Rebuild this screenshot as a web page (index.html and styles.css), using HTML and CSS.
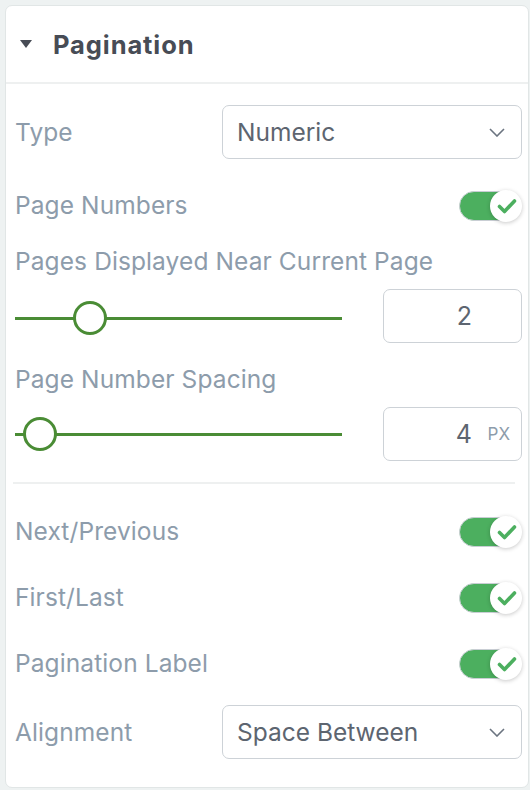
FILE: index.html
```html
<!DOCTYPE html>
<html lang="en">
<head>
<meta charset="utf-8">
<title>Pagination</title>
<link rel="stylesheet" href="styles.css">
</head>
<body>
<div class="card">
  <div class="card-header">
    <span class="caret"></span>
    <span class="title">Pagination</span>
  </div>
  <div class="card-body">
    <div class="row row-select first">
      <span class="label">Type</span>
      <div class="select"><span>Numeric</span>
        <svg class="chev" width="16" height="9" viewBox="0 0 16 9"><path d="M1 1l7 7 7-7" fill="none" stroke="#6b7480" stroke-width="1.6"/></svg>
      </div>
    </div>
    <div class="row row-toggle t1">
      <span class="label">Page Numbers</span>
      <div class="toggle"><div class="track"></div><div class="knob"><svg width="20" height="16" viewBox="0 0 20 16"><path d="M2.5 8.5l5 5L17.5 3" fill="none" stroke="#4caf5f" stroke-width="3.6" stroke-linecap="round" stroke-linejoin="round"/></svg></div></div>
    </div>
    <div class="label block-label l1">Pages Displayed Near Current Page</div>
    <div class="row row-slider s1">
      <div class="slider"><div class="rail"></div><div class="thumb" style="left:58px"></div></div>
      <div class="num"><span class="val">2</span></div>
    </div>
    <div class="label block-label l2">Page Number Spacing</div>
    <div class="row row-slider s2">
      <div class="slider"><div class="rail"></div><div class="thumb" style="left:8px"></div></div>
      <div class="num"><span class="val">4</span><span class="unit">PX</span></div>
    </div>
    <div class="divider"></div>
    <div class="row row-toggle t2">
      <span class="label">Next/Previous</span>
      <div class="toggle"><div class="track"></div><div class="knob"><svg width="20" height="16" viewBox="0 0 20 16"><path d="M2.5 8.5l5 5L17.5 3" fill="none" stroke="#4caf5f" stroke-width="3.6" stroke-linecap="round" stroke-linejoin="round"/></svg></div></div>
    </div>
    <div class="row row-toggle t3">
      <span class="label">First/Last</span>
      <div class="toggle"><div class="track"></div><div class="knob"><svg width="20" height="16" viewBox="0 0 20 16"><path d="M2.5 8.5l5 5L17.5 3" fill="none" stroke="#4caf5f" stroke-width="3.6" stroke-linecap="round" stroke-linejoin="round"/></svg></div></div>
    </div>
    <div class="row row-toggle t3">
      <span class="label">Pagination Label</span>
      <div class="toggle"><div class="track"></div><div class="knob"><svg width="20" height="16" viewBox="0 0 20 16"><path d="M2.5 8.5l5 5L17.5 3" fill="none" stroke="#4caf5f" stroke-width="3.6" stroke-linecap="round" stroke-linejoin="round"/></svg></div></div>
    </div>
    <div class="row row-select last">
      <span class="label">Alignment</span>
      <div class="select"><span>Space Between</span>
        <svg class="chev" width="16" height="9" viewBox="0 0 16 9"><path d="M1 1l7 7 7-7" fill="none" stroke="#6b7480" stroke-width="1.6"/></svg>
      </div>
    </div>
  </div>
</div>
</body>
</html>
```
FILE: styles.css
```css
html, body { margin: 0; padding: 0; }
body {
  background: #eef2f2;
  font-family: Inter, "Noto Sans", sans-serif;
  width: 530px;
  height: 790px;
  overflow: hidden;
}
.card {
  margin: 5px 0 0 5px;
  width: 524px;
  box-sizing: border-box;
  background: #fff;
  border: 1px solid #e1e6e6;
  border-radius: 7px;
  height: 783px;
}
.card-header {
  height: 76px;
  border-bottom: 2px solid #eef0f0;
  display: flex;
  align-items: center;
  padding-left: 14px;
  box-sizing: content-box;
}
.caret {
  width: 0; height: 0;
  border-left: 6px solid transparent;
  border-right: 6px solid transparent;
  border-top: 8px solid #474c55;
  margin-right: 21px;
}
.title {
  font-size: 25.5px;
  font-weight: 700;
  color: #474c55;
  letter-spacing: 0.9px;
}
.card-body {
  padding: 21px 6px 0 9px;
}
.label {
  font-size: 24.5px;
  color: #8d9cab;
  letter-spacing: 0.1px;
}
.row {
  display: flex;
  align-items: center;
  justify-content: space-between;
}
.row-select { height: 54px; }
.row-toggle { height: 32px; }
.row-toggle .label { margin-top: -3px; }
.t1 { margin-top: 31px; }
.t2 { margin-top: 32px; }
.t3 { margin-top: 34px; }
.last { margin-top: 25px; }
.select {
  width: 300px;
  height: 54px;
  box-sizing: border-box;
  border: 1.5px solid #cdd2d7;
  border-radius: 7px;
  display: flex;
  align-items: center;
  justify-content: space-between;
  padding: 0 16px 0 14px;
  font-size: 24.5px;
  color: #5d6570;
}
.chev { margin-top: 1px; }
.toggle {
  position: relative;
  width: 63px;
  height: 32px;
}
.track {
  position: absolute;
  left: 0; top: 1px;
  width: 60px; height: 30px;
  box-sizing: border-box;
  border-radius: 15px;
  background: #4caf5f;
  border: 1.5px solid #c9ced4;
}
.knob {
  position: absolute;
  right: 0; top: 0;
  width: 32px; height: 32px;
  border-radius: 50%;
  background: #fff;
  box-shadow: 0 1px 4px rgba(0,0,0,0.22);
  display: flex;
  align-items: center;
  justify-content: center;
}
.knob svg { margin-left: 1px; }
.block-label { line-height: 30px; height: 30px; }
.l1 { margin-top: 24px; }
.l2 { margin-top: 21px; }
.row-slider { height: 54px; margin-top: 13px; }
.slider {
  position: relative;
  width: 327px;
  height: 36px;
}
.s1 .slider { margin-top: 4px; }
.rail {
  position: absolute;
  left: 0; right: 0; top: 17px;
  height: 3px;
  background: #4a8c35;
}
.thumb {
  position: absolute;
  top: 1px;
  width: 34px; height: 34px;
  box-sizing: border-box;
  border-radius: 50%;
  border: 3.5px solid #4a8c35;
  background: #fff;
}
.num {
  position: relative;
  width: 139px;
  height: 54px;
  box-sizing: border-box;
  border: 1.5px solid #cdd2d7;
  border-radius: 7px;
  display: flex;
  align-items: center;
  justify-content: flex-end;
  padding-right: 49px;
}
.val {
  font-size: 25px;
  color: #5d6570;
}
.unit {
  position: absolute;
  right: 11px;
  top: 16px;
  font-size: 17px;
  color: #8d9cab;
}
.divider {
  height: 2px;
  background: #eef0f0;
  margin: 21px 7px 0 -2px;
}
```
